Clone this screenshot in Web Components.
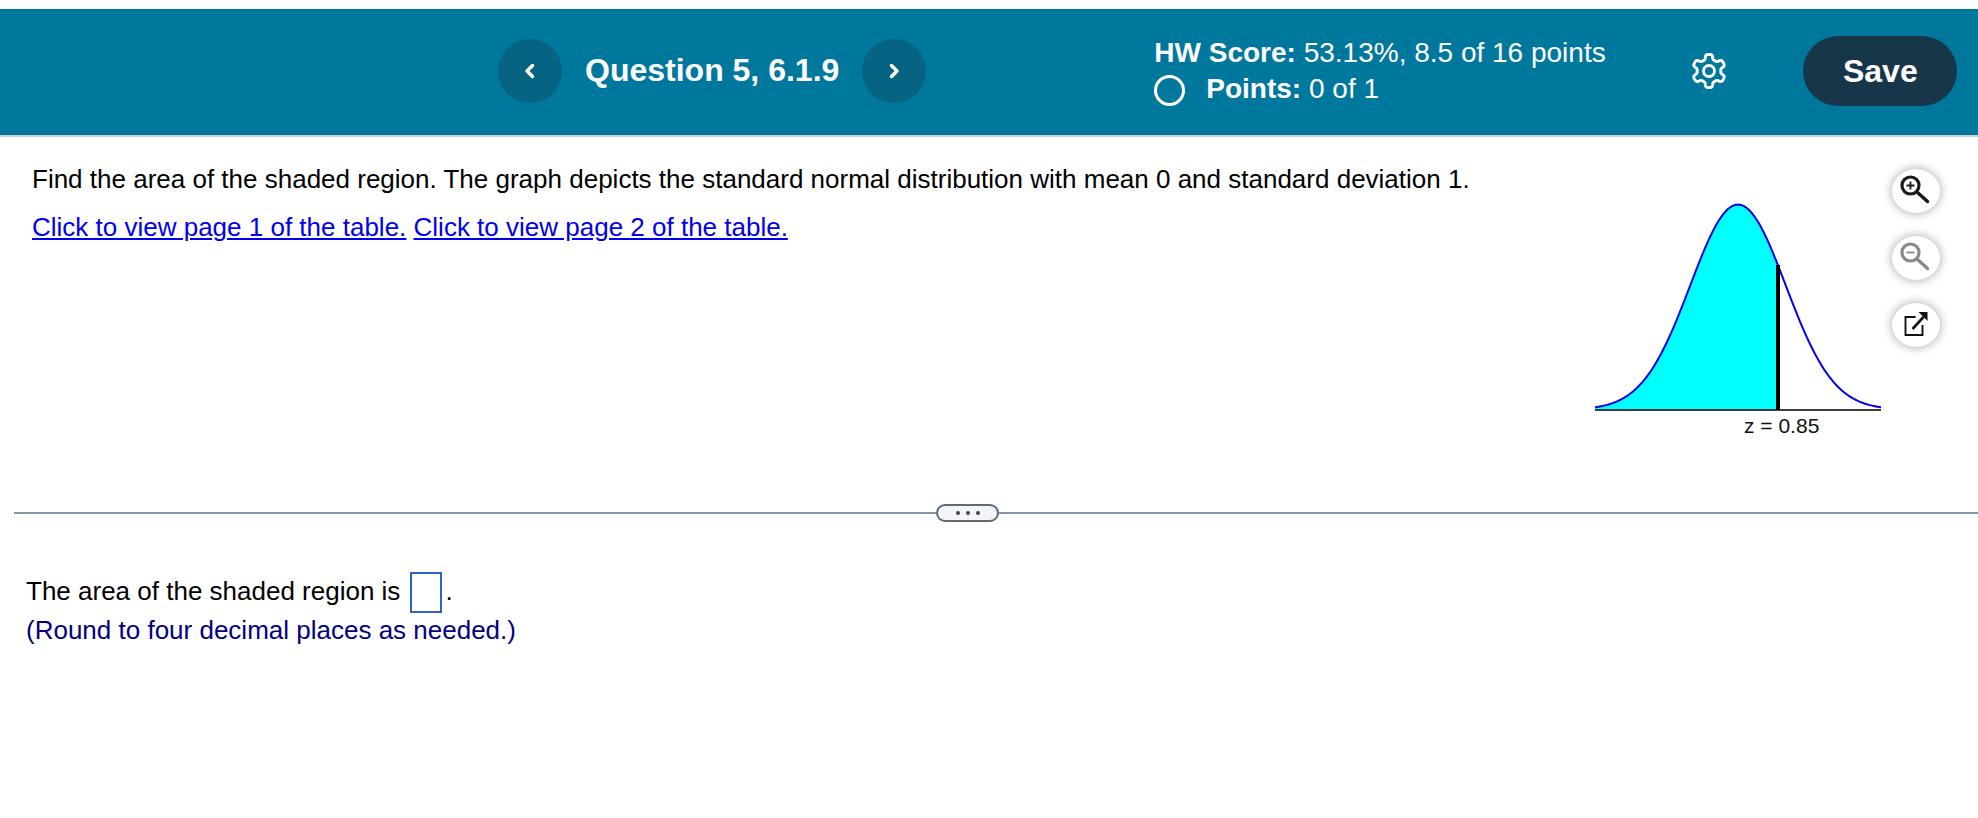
<!DOCTYPE html>
<html lang="en"><head><meta charset="utf-8"><title>Question 5, 6.1.9</title>
<style>
html,body{margin:0;padding:0;background:#fff;font-family:"Liberation Sans",Arial,sans-serif;color:#000;overflow:hidden}
</style></head><body>
<hw-app></hw-app>
<script>
const def=(name,html,init)=>customElements.define(name,class extends HTMLElement{
  constructor(){super();this.attachShadow({mode:'open'}).innerHTML=html;}
  connectedCallback(){init&&init(this);}
});
def('nav-button',`<style>:host{display:flex;width:64px;height:64px;border-radius:50%;background:#066482;align-items:center;justify-content:center}
svg{width:12px;height:18px;fill:none;stroke:#fff;stroke-width:3.4;stroke-linecap:round;stroke-linejoin:round}</style>
<svg viewBox="0 0 12 18"><path id="p" d="M8.5 3.5 3 9l5.500 5.500"/></svg>`,e=>{if(e.hasAttribute('next'))e.shadowRoot.getElementById('p').setAttribute('d','M3.500 3.500 9 9l-5.500 5.500');});
def('gear-icon',`<style>:host{display:block;width:38px;height:38px}svg{display:block;width:100%;height:100%}</style>
<svg viewBox="0 0 38 38" fill="none" stroke="#fff" stroke-width="2.9" stroke-linejoin="round"><path id="g"/><circle cx="19" cy="19" r="5.5"/></svg>`,e=>{
  let d='';
  for(let i=0;i<=240;i++){
    const t=i/240*Math.PI*2;
    const r=14.2+2.4*Math.tanh(2.4*Math.cos(6*(t+Math.PI/2)));
    d+=(i?'L':'M')+(19+r*Math.cos(t)).toFixed(2)+' '+(19+r*Math.sin(t)).toFixed(2);
  }
  e.shadowRoot.getElementById('g').setAttribute('d',d+'Z');
});
def('hw-score',`<style>:host{display:block;color:#fff;font-size:28px;line-height:36px;width:520px}
b{font-weight:700}.r{display:flex;align-items:center}.c{box-sizing:border-box;width:31px;height:31px;border:3.5px solid #fff;border-radius:50%;margin:3px 21px 0 0;flex:none}</style>
<div><b>HW Score:</b> 53.13%, 8.5 of 16 points</div><div class="r"><span class="c"></span><span><b>Points:</b> 0 of 1</span></div>`);
def('save-button',`<style>:host{display:flex;width:154px;height:70px;border-radius:35px;background:#17364a;color:#fff;font:700 32px "Liberation Sans",Arial,sans-serif;align-items:center;justify-content:center}</style><slot></slot>`);
def('top-bar',`<style>:host{display:flex;box-sizing:border-box;height:128px;margin-top:9px;background:#00789e;border-bottom:2px solid #c3cfdf;align-items:center;padding-left:498px}
h1{margin:-3px 23px 0 23px;color:#fff;font:700 32px "Liberation Sans",Arial,sans-serif;white-space:nowrap}
hw-score{margin-left:228px;margin-top:-3px}gear-icon{margin-left:16px;margin-top:-2px}save-button{margin-left:75px;margin-top:-2px}nav-button{margin-top:-2px}</style>
<nav-button></nav-button><h1>Question 5, 6.1.9</h1><nav-button next></nav-button><hw-score></hw-score><gear-icon></gear-icon><save-button>Save</save-button>`);
def('normal-graph',`<style>:host{display:block;width:300px;height:260px}svg{display:block}text{font:21px "Liberation Sans",Arial,sans-serif;fill:#111}</style>
<svg width="300" height="260" viewBox="0 0 300 260"><path id="f" fill="#0ff"/><path id="c" fill="none" stroke="#0000f0" stroke-width="2"/>
<path d="M5 228H291" stroke="#3c3c3c" stroke-width="2"/><path d="M188 83V228" stroke="#000" stroke-width="4"/>
<text x="154" y="251">z = 0.85</text></svg>`,e=>{
  const s=47.7,cx=148,base=227,h=205;let c='',f='';
  const y=x=>base-h*Math.exp(-((x-cx)**2)/(2*s*s))+.6;
  for(let x=5;x<=291;x+=1)c+=(x==5?'M':'L')+x+' '+y(x).toFixed(2);
  f='M5 '+base;for(let x=5;x<=188;x+=1)f+='L'+x+' '+y(x).toFixed(2);f+='L188 '+base+'Z';
  const r=e.shadowRoot;r.getElementById('c').setAttribute('d',c);r.getElementById('f').setAttribute('d',f);
});
def('round-tool',`<style>:host{display:flex;width:48px;height:44px;border-radius:50%;background:#fff;box-shadow:0 0 10px 1px rgba(0,0,0,.3);align-items:center;justify-content:center}svg{display:block;width:34px;height:34px}</style>
<svg viewBox="0 0 34 34" fill="none" id="s"></svg>`,e=>{
  const k=e.getAttribute('kind'),s=e.shadowRoot.getElementById('s');
  const glass=(col,plus)=>`<circle cx="11.500" cy="11.500" r="8.500" stroke="${col}" stroke-width="3.200"/><path d="M18.500 18.500 28.500 27.500" stroke="${col}" stroke-width="3.400" stroke-linecap="round"/><path d="M7.500 11.500h8${plus?'M11.500 7.500v8':''}" stroke="${col}" stroke-width="1.800"/>`;
  if(k=='in')s.innerHTML=glass('#1a1a1a',true);
  if(k=='out')s.innerHTML=glass('#8a8a8a',false);
  if(k=='open')s.innerHTML=`<path d="M16.500 9H6.500v18h17V17" stroke="#111" stroke-width="1.9"/><path d="M13.500 21 24.500 9" stroke="#111" stroke-width="2.6"/><path d="M19.500 4h9v9z" fill="#111"/>`;
});
def('question-pane',`<style>:host{display:flex;box-sizing:border-box;height:367px;font-size:26px;line-height:48px;padding:18px 0 0 32px}
.t{flex:1}p{margin:0}a{color:#00e;text-decoration:underline}
.g{margin:27px 2px 0 0}.tools{display:flex;flex-direction:column;gap:23px;margin:14px 38px 0 0}</style>
<div class="t"><p>Find the area of the shaded region. The graph depicts the standard normal distribution with mean 0 and standard deviation 1.</p>
<p><a href="#">Click to view page 1 of the table.</a> <a href="#">Click to view page 2 of the table.</a></p></div>
<normal-graph class="g"></normal-graph><div class="tools"><round-tool kind="in"></round-tool><round-tool kind="out"></round-tool><round-tool kind="open"></round-tool></div>`);
def('pane-divider',`<style>:host{display:flex;align-items:center;height:18px;margin-left:14px}i{flex:none;height:2px;background:#8a90a6}i.a{width:922px}i.b{flex:1}
.p{box-sizing:border-box;width:63px;height:18px;border:2.5px solid #5c6a7e;border-radius:9px;background:#f3f4f7;display:flex;align-items:center;justify-content:center;gap:6px}
.p span{width:4px;height:4px;border-radius:50%;background:#444}</style><i class="a"></i><div class="p"><span></span><span></span><span></span></div><i class="b"></i>`);
def('answer-pane',`<style>:host{display:block;padding:50px 0 0 26px;font-size:26px;line-height:39px}
.box{display:inline-block;box-sizing:border-box;width:32px;height:41px;border:2px solid #2d63c8;vertical-align:middle;margin:-5px 4px -5px 2px;position:relative;top:-1px}
p{margin:0}.h{color:#000080}</style>
<p>The area of the shaded region is <span class="box"></span>.</p><p class="h">(Round to four decimal places as needed.)</p>`);
def('hw-app',`<style>:host{display:block;width:1978px;height:818px;overflow:hidden}</style><top-bar></top-bar><question-pane></question-pane><pane-divider></pane-divider><answer-pane></answer-pane>`);
</script></body></html>
